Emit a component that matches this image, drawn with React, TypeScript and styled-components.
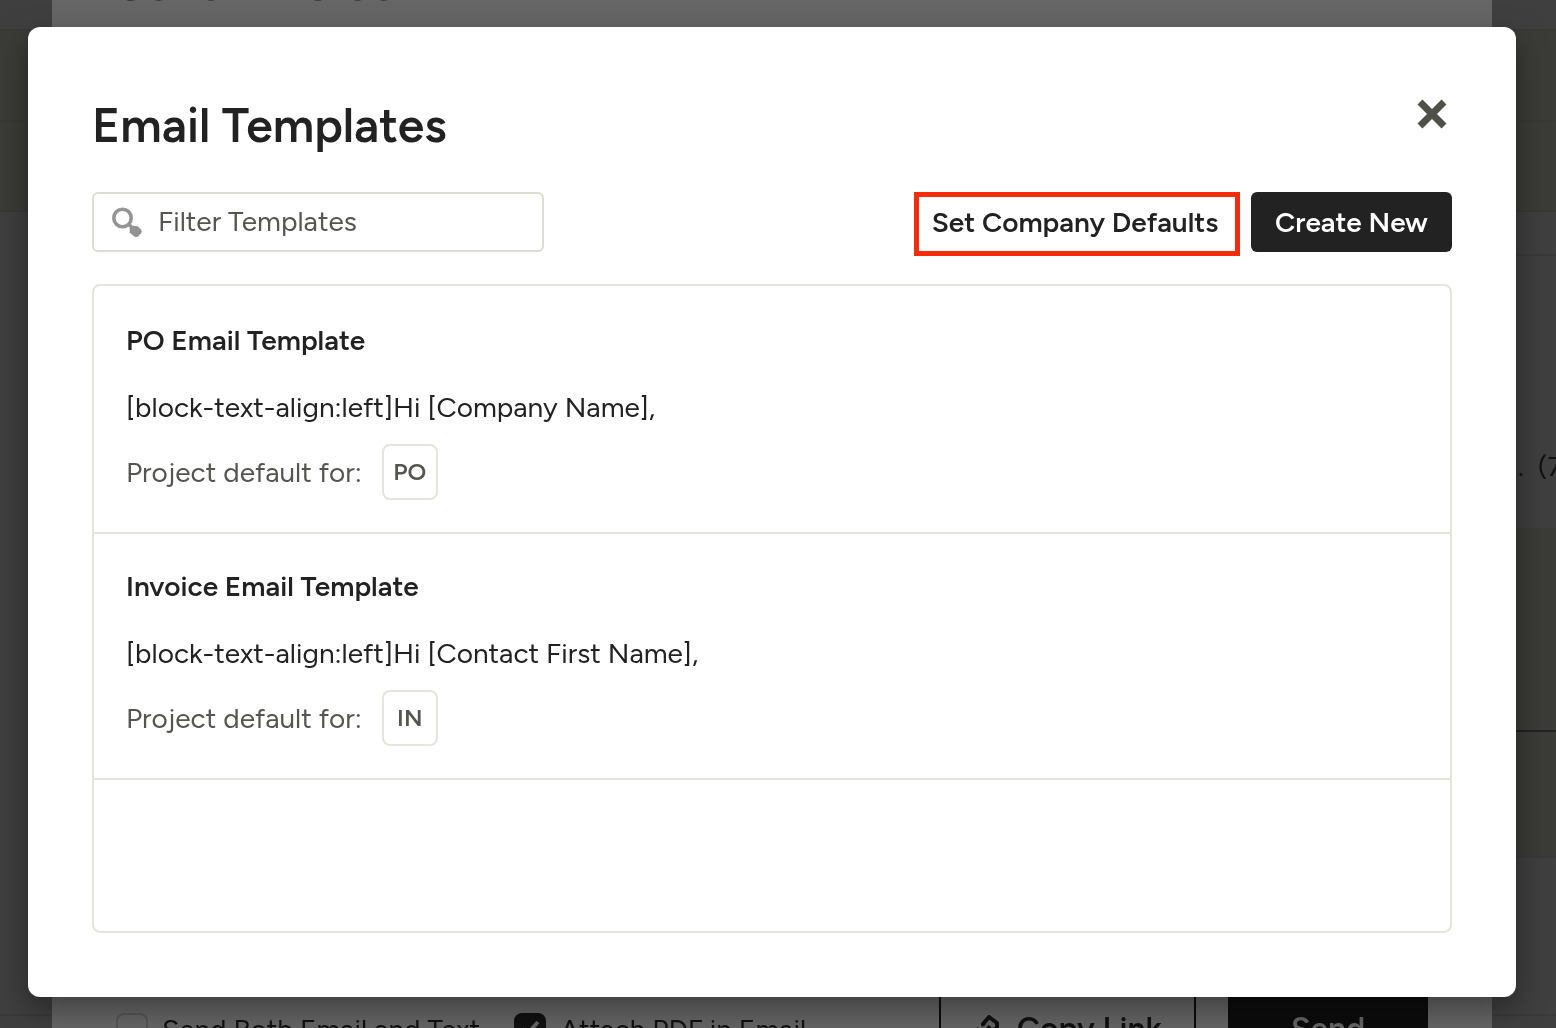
import React, { useState } from 'react';
import styled, { createGlobalStyle } from 'styled-components';

const GlobalStyle = createGlobalStyle`
  *, *::before, *::after { box-sizing: border-box; }
  body {
    margin: 0;
    background: #3f3f3e;
    color: #222;
    font-family: Figtree, Lato, "Open Sans", sans-serif;
    font-size: 28px;
  }
  h1, h2, p, ul { margin: 0; padding: 0; }
  button, input { font: inherit; }
`;

/* ---------- dimmed page behind the modal ---------- */

const Backdrop = styled.div`
  position: fixed;
  inset: -40px 0 -44px;
  display: grid;
  grid-template-columns: 52px 1fr 64px;
  color: #111;
`;

const Gutter = styled.div`
  display: flex;
  flex-direction: column;
  overflow: hidden;
`;

const Band = styled.div<{ $height?: number; $tinted?: boolean; $line?: string }>`
  flex: ${(p) => (p.$height ? `0 0 ${p.$height}px` : '1')};
  background: ${(p) => (p.$tinted ? '#3b3b38' : '#3f3f3f')};
  border-bottom: 2px solid ${(p) => p.$line || '#393937'};
`;

const Phone = styled.p`
  padding: 190px 0 0 26px;
  line-height: 40px;
  white-space: pre;
`;

const SendPanel = styled.section`
  display: flex;
  flex-direction: column;
  justify-content: space-between;
  padding: 0 64px;
  background: #666;
`;

const SendTitle = styled.h2`
  font-size: 48px;
  line-height: 46px;
  font-weight: 600;
`;

const SendFooter = styled.div`
  display: flex;
  align-items: center;
  height: 86px;
  gap: 34px;
`;

const Check = styled.label`
  display: flex;
  align-items: center;
  gap: 14px;
`;

const CheckBox = styled.input`
  appearance: none;
  width: 32px;
  height: 32px;
  margin: 0;
  border: 2px solid #555;
  border-radius: 8px;
  &:checked {
    border-color: #111;
    background: #111;
  }
`;

const CheckWrap = styled.span`
  display: grid;
  > * { grid-area: 1 / 1; }
  svg { place-self: center; pointer-events: none; }
`;

const SendActions = styled.div`
  display: flex;
  gap: 32px;
  margin-left: auto;
`;

const SendButton = styled.button<{ $solid?: boolean }>`
  display: flex;
  align-items: center;
  justify-content: center;
  gap: 16px;
  width: ${(p) => (p.$solid ? 200 : 257)}px;
  height: 86px;
  padding: 0;
  border: 2px solid #0c0c0c;
  background: ${(p) => (p.$solid ? '#0c0c0c' : 'transparent')};
  color: ${(p) => (p.$solid ? '#666' : '#111')};
  font-size: 32px;
  font-weight: 600;
`;

/* ---------- modal ---------- */

const ModalLayer = styled.div`
  position: relative;
  display: flex;
  min-height: 100vh;
  padding: 27px 40px 31px 28px;
`;

const Modal = styled.main`
  flex: 1;
  display: flex;
  flex-direction: column;
  padding: 67px 64px 64px;
  border-radius: 12px;
  background: #fff;
  box-shadow: 0 12px 32px rgba(0, 0, 0, 0.4);
`;

const Header = styled.header`
  display: flex;
  align-items: flex-start;
  justify-content: space-between;
  margin-bottom: 36px;
`;

const Title = styled.h1`
  font-size: 48px;
  line-height: 62px;
  font-weight: 600;
`;

const CloseButton = styled.button`
  display: grid;
  place-items: center;
  width: 40px;
  height: 40px;
  padding: 0;
  border: 0;
  background: none;
  color: #4f5048;
`;

const Toolbar = styled.div`
  display: flex;
  align-items: flex-start;
  justify-content: space-between;
  margin-bottom: 28px;
`;

const FilterBox = styled.label`
  display: flex;
  align-items: center;
  gap: 16px;
  width: 452px;
  height: 60px;
  padding: 0 16px;
  border: 2px solid #dcdcd2;
  border-radius: 6px;
`;

const FilterInput = styled.input`
  flex: 1;
  min-width: 0;
  padding: 0 0 2px;
  border: 0;
  outline: 0;
  background: none;
  color: #222;
  &::placeholder { color: #55564f; opacity: 1; }
`;

const Actions = styled.div`
  display: flex;
  align-items: flex-start;
  gap: 11px;
`;

const DefaultsButton = styled.button`
  min-width: 326px;
  height: 64px;
  padding: 0 16px 4px 12px;
  border: 5px solid #f52c0b;
  background: #fff;
  color: #222;
  font-weight: 600;
`;

const CreateButton = styled.button`
  min-width: 201px;
  height: 60px;
  padding: 0 20px;
  border: 0;
  border-radius: 6px;
  background: #222;
  color: #fff;
  font-weight: 600;
`;

const TemplateList = styled.ul`
  flex: 1;
  padding-top: 2px;
  border: 2px solid #e5e5dc;
  border-radius: 8px;
  list-style: none;
`;

const TemplateRow = styled.li`
  padding: 32px;
  border-bottom: 2px solid #e5e5dc;
  line-height: 40px;
`;

const TemplateName = styled.h2`
  margin-bottom: 27px;
  font-size: 28px;
  font-weight: 600;
`;

const Preview = styled.p`
  margin-bottom: 17px;
`;

const DefaultFor = styled.div`
  display: flex;
  align-items: center;
  gap: 20px;
  color: #55564f;
`;

const Chip = styled.span`
  display: grid;
  place-items: center;
  width: 56px;
  height: 56px;
  border: 2px solid #e5e5dc;
  border-radius: 8px;
  font-size: 24px;
  font-weight: 600;
`;

const SearchIcon = () => (
  <svg width="32" height="32" viewBox="0 0 32 32" fill="none" stroke="#949494" aria-hidden="true">
    <circle cx="12.5" cy="12" r="8.7" strokeWidth="3.6" />
    <path d="M18.5 18 23 22.5" strokeWidth="3.6" />
    <path
      d="M23.2 19.8 27.6 20.2 31 23.6Q32.4 25.6 31 27.4L28 30.4Q26.2 31.8 24.4 30.4L19.8 26.8 19.6 22.6Z"
      fill="#949494"
      stroke="none"
    />
  </svg>
);

const CloseIcon = () => (
  <svg width="30" height="30" viewBox="0 0 30 30" stroke="currentColor" strokeWidth="7" aria-hidden="true">
    <path d="M3 3 27 27M27 3 3 27" />
  </svg>
);

const LinkIcon = () => (
  <svg width="28" height="28" viewBox="0 0 28 28" fill="none" stroke="currentColor" strokeWidth="4" strokeLinejoin="round" aria-hidden="true">
    <path d="M11 11 10 9 16 2 24 8 24 12 17 18 14 15 17 11M17 17 18 19 12 26 4 20 4 16 6 13" />
  </svg>
);

const templates = [
  { name: 'PO Email Template', preview: '[block-text-align:left]Hi [Company Name],', code: 'PO' },
  { name: 'Invoice Email Template', preview: '[block-text-align:left]Hi [Contact First Name],', code: 'IN' },
];

export default function App() {
  const [filter, setFilter] = useState('');
  const shown = templates.filter((t) => t.name.toLowerCase().includes(filter.toLowerCase()));

  return (
    <>
      <GlobalStyle />
      <Backdrop>
        <Gutter>
          <Band $height={71} />
          <Band $height={91} $tinted />
          <Band $height={90} $tinted />
          <Band />
          <Band $height={56} />
        </Gutter>
        <SendPanel>
          <SendTitle>Send Invoice</SendTitle>
          <SendFooter>
            <Check>
              <CheckBox type="checkbox" />
              Send Both Email and Text
            </Check>
            <Check>
              <CheckWrap>
                <CheckBox type="checkbox" defaultChecked />
                <svg width="20" height="18" viewBox="0 0 20 18" fill="none" stroke="#666" strokeWidth="4">
                  <path d="M2 9 7 14 18 2" />
                </svg>
              </CheckWrap>
              Attach PDF in Email
            </Check>
            <SendActions>
              <SendButton type="button">
                <LinkIcon />
                Copy Link
              </SendButton>
              <SendButton type="button" $solid>Send</SendButton>
            </SendActions>
          </SendFooter>
        </SendPanel>
        <Gutter>
          <Band $height={71} />
          <Band $height={91} $tinted />
          <Band $height={90} $tinted />
          <Band $height={44} />
          <Band $height={274} $line="#3b3b38">
            <Phone>.  (7</Phone>
          </Band>
          <Band $height={202} $tinted $line="#222" />
          <Band $height={126} $tinted />
          <Band />
          <Band $height={56} />
        </Gutter>
      </Backdrop>

      <ModalLayer>
        <Modal role="dialog" aria-labelledby="modal-title">
          <Header>
            <Title id="modal-title">Email Templates</Title>
            <CloseButton type="button" aria-label="Close">
              <CloseIcon />
            </CloseButton>
          </Header>

          <Toolbar>
            <FilterBox>
              <SearchIcon />
              <FilterInput
                aria-label="Filter Templates"
                placeholder="Filter Templates"
                value={filter}
                onChange={(e) => setFilter(e.target.value)}
              />
            </FilterBox>
            <Actions>
              <DefaultsButton type="button">Set Company Defaults</DefaultsButton>
              <CreateButton type="button">Create New</CreateButton>
            </Actions>
          </Toolbar>

          <TemplateList>
            {shown.map((t) => (
              <TemplateRow key={t.code}>
                <TemplateName>{t.name}</TemplateName>
                <Preview>{t.preview}</Preview>
                <DefaultFor>
                  Project default for:
                  <Chip>{t.code}</Chip>
                </DefaultFor>
              </TemplateRow>
            ))}
          </TemplateList>
        </Modal>
      </ModalLayer>
    </>
  );
}
